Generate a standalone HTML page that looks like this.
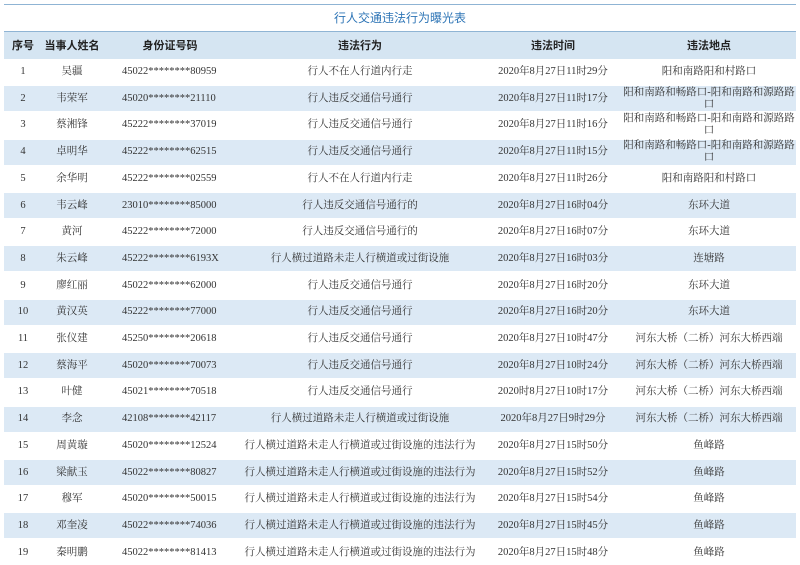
<!DOCTYPE html>
<html><head><meta charset="utf-8"><style>
body{margin:0;width:800px;height:565px;background:#fff;position:relative;overflow:hidden;font-family:"Liberation Serif","Noto Serif CJK SC",serif;color:#333;}
.topline{position:absolute;left:4px;right:4px;top:4px;height:1px;background:#8fb4d4;}
.title{position:absolute;left:0;width:800px;top:9px;text-align:center;font:12px "Liberation Sans","Noto Sans CJK SC",sans-serif;color:#2e75b6;}
.hdr{position:absolute;left:4px;right:4px;top:31px;height:27px;background:#d5e5f2;border-top:1px solid #8fb4d4;font:bold 11px "Liberation Sans","Noto Sans CJK SC",sans-serif;color:#222;}
.row{position:absolute;left:4px;right:4px;height:25px;font-size:10.5px;line-height:12px;}
.row.s{background:#dce9f5;}
.c{position:absolute;top:0;height:100%;display:flex;align-items:center;justify-content:center;text-align:center;line-height:12px;}
.c1{left:0;width:38px}.c2{left:38px;width:60px}.c3{left:118px;width:140px;justify-content:flex-start}
.c4{left:236px;width:240px}.c5{left:476px;width:146px}.c6{left:618px;width:174px;font-size:10.5px}
.hdr .c3{left:96px;justify-content:center}
</style></head><body>
<div class="topline"></div>
<div class="title">行人交通违法行为曝光表</div>
<div class="hdr"><div class="c c1">序号</div><div class="c c2">当事人姓名</div><div class="c c3">身份证号码</div><div class="c c4">违法行为</div><div class="c c5">违法时间</div><div class="c c6" style="font-size:11px">违法地点</div></div>

<div class="row" style="top:59.5px"><div class="c c1">1</div><div class="c c2">吴疆</div><div class="c c3">45022********80959</div><div class="c c4">行人不在人行道内行走</div><div class="c c5">2020年8月27日11时29分</div><div class="c c6">阳和南路阳和村路口</div></div>
<div class="row s" style="top:86.2px"><div class="c c1">2</div><div class="c c2">韦荣军</div><div class="c c3">45020********21110</div><div class="c c4">行人违反交通信号通行</div><div class="c c5">2020年8月27日11时17分</div><div class="c c6">阳和南路和畅路口-阳和南路和源路路口</div></div>
<div class="row" style="top:112.9px"><div class="c c1">3</div><div class="c c2">蔡湘锋</div><div class="c c3">45222********37019</div><div class="c c4">行人违反交通信号通行</div><div class="c c5">2020年8月27日11时16分</div><div class="c c6">阳和南路和畅路口-阳和南路和源路路口</div></div>
<div class="row s" style="top:139.6px"><div class="c c1">4</div><div class="c c2">卓明华</div><div class="c c3">45222********62515</div><div class="c c4">行人违反交通信号通行</div><div class="c c5">2020年8月27日11时15分</div><div class="c c6">阳和南路和畅路口-阳和南路和源路路口</div></div>
<div class="row" style="top:166.3px"><div class="c c1">5</div><div class="c c2">余华明</div><div class="c c3">45222********02559</div><div class="c c4">行人不在人行道内行走</div><div class="c c5">2020年8月27日11时26分</div><div class="c c6">阳和南路阳和村路口</div></div>
<div class="row s" style="top:193px"><div class="c c1">6</div><div class="c c2">韦云峰</div><div class="c c3">23010********85000</div><div class="c c4">行人违反交通信号通行的</div><div class="c c5">2020年8月27日16时04分</div><div class="c c6">东环大道</div></div>
<div class="row" style="top:219.7px"><div class="c c1">7</div><div class="c c2">黄河</div><div class="c c3">45222********72000</div><div class="c c4">行人违反交通信号通行的</div><div class="c c5">2020年8月27日16时07分</div><div class="c c6">东环大道</div></div>
<div class="row s" style="top:246.4px"><div class="c c1">8</div><div class="c c2">朱云峰</div><div class="c c3">45222********6193X</div><div class="c c4">行人横过道路未走人行横道或过街设施</div><div class="c c5">2020年8月27日16时03分</div><div class="c c6">连塘路</div></div>
<div class="row" style="top:273.1px"><div class="c c1">9</div><div class="c c2">廖红丽</div><div class="c c3">45022********62000</div><div class="c c4">行人违反交通信号通行</div><div class="c c5">2020年8月27日16时20分</div><div class="c c6">东环大道</div></div>
<div class="row s" style="top:299.8px"><div class="c c1">10</div><div class="c c2">黄汉英</div><div class="c c3">45222********77000</div><div class="c c4">行人违反交通信号通行</div><div class="c c5">2020年8月27日16时20分</div><div class="c c6">东环大道</div></div>
<div class="row" style="top:326.5px"><div class="c c1">11</div><div class="c c2">张仪建</div><div class="c c3">45250********20618</div><div class="c c4">行人违反交通信号通行</div><div class="c c5">2020年8月27日10时47分</div><div class="c c6">河东大桥（二桥）河东大桥西端</div></div>
<div class="row s" style="top:353.2px"><div class="c c1">12</div><div class="c c2">蔡海平</div><div class="c c3">45020********70073</div><div class="c c4">行人违反交通信号通行</div><div class="c c5">2020年8月27日10时24分</div><div class="c c6">河东大桥（二桥）河东大桥西端</div></div>
<div class="row" style="top:379.9px"><div class="c c1">13</div><div class="c c2">叶健</div><div class="c c3">45021********70518</div><div class="c c4">行人违反交通信号通行</div><div class="c c5">2020时8月27日10时17分</div><div class="c c6">河东大桥（二桥）河东大桥西端</div></div>
<div class="row s" style="top:406.6px"><div class="c c1">14</div><div class="c c2">李念</div><div class="c c3">42108********42117</div><div class="c c4">行人横过道路未走人行横道或过街设施</div><div class="c c5">2020年8月27日9时29分</div><div class="c c6">河东大桥（二桥）河东大桥西端</div></div>
<div class="row" style="top:433.3px"><div class="c c1">15</div><div class="c c2">周黄璇</div><div class="c c3">45020********12524</div><div class="c c4">行人横过道路未走人行横道或过街设施的违法行为</div><div class="c c5">2020年8月27日15时50分</div><div class="c c6">鱼峰路</div></div>
<div class="row s" style="top:460px"><div class="c c1">16</div><div class="c c2">梁献玉</div><div class="c c3">45022********80827</div><div class="c c4">行人横过道路未走人行横道或过街设施的违法行为</div><div class="c c5">2020年8月27日15时52分</div><div class="c c6">鱼峰路</div></div>
<div class="row" style="top:486.7px"><div class="c c1">17</div><div class="c c2">穆军</div><div class="c c3">45020********50015</div><div class="c c4">行人横过道路未走人行横道或过街设施的违法行为</div><div class="c c5">2020年8月27日15时54分</div><div class="c c6">鱼峰路</div></div>
<div class="row s" style="top:513.4px"><div class="c c1">18</div><div class="c c2">邓奎凌</div><div class="c c3">45022********74036</div><div class="c c4">行人横过道路未走人行横道或过街设施的违法行为</div><div class="c c5">2020年8月27日15时45分</div><div class="c c6">鱼峰路</div></div>
<div class="row" style="top:540.1px"><div class="c c1">19</div><div class="c c2">秦明鹏</div><div class="c c3">45022********81413</div><div class="c c4">行人横过道路未走人行横道或过街设施的违法行为</div><div class="c c5">2020年8月27日15时48分</div><div class="c c6">鱼峰路</div></div>
</body></html>
